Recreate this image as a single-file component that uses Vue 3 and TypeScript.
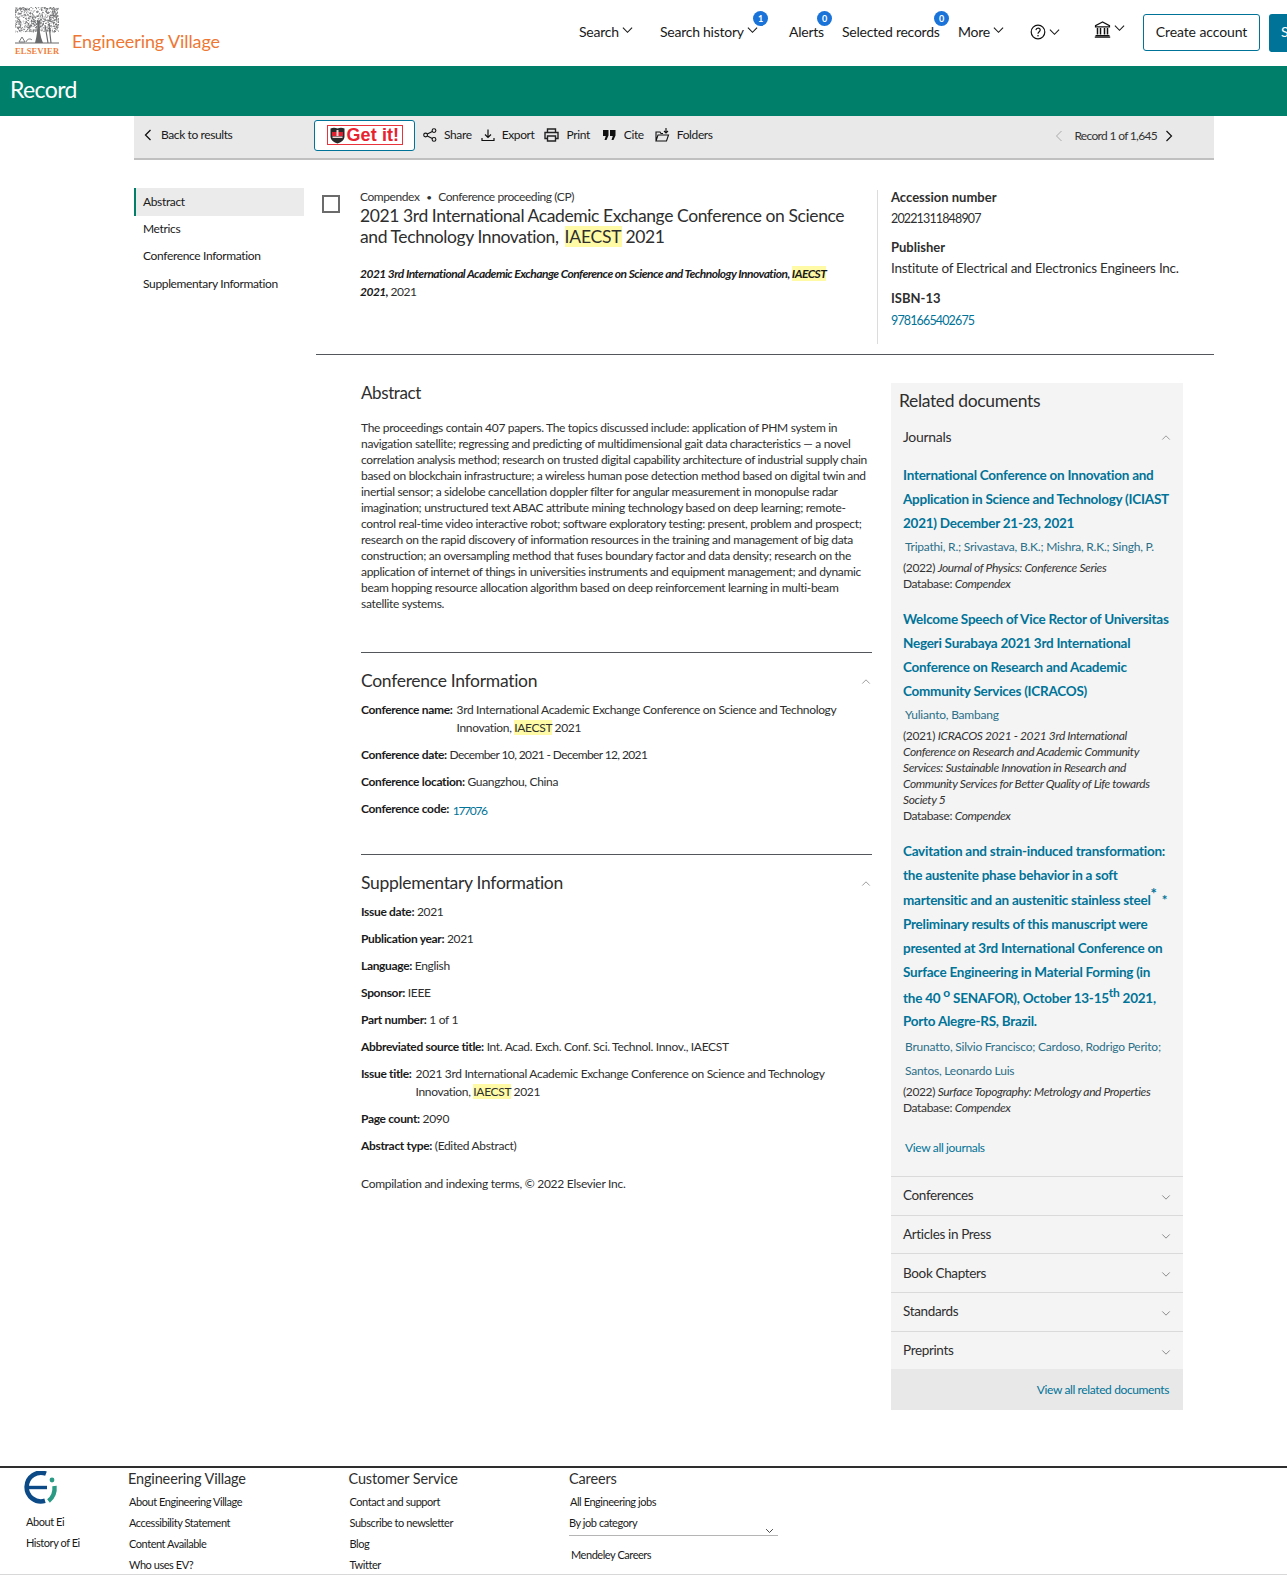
<script setup lang="ts">
const treeDots: { x: number; y: number; r: number }[] = []
let seed = 17
const rnd = () => {
  seed = (seed * 16807) % 2147483647
  return seed / 2147483647
}
for (let i = 0; i < 760; i++) {
  const x = rnd() * 44
  const y = rnd() * 25
  treeDots.push({ x: +x.toFixed(1), y: +y.toFixed(1), r: +(0.3 + rnd() * 0.4).toFixed(2) })
}

const abstractLines = [
  'The proceedings contain 407 papers. The topics discussed include: application of PHM system in',
  'navigation satellite; regressing and predicting of multidimensional gait data characteristics — a novel',
  'correlation analysis method; research on trusted digital capability architecture of industrial supply chain',
  'based on blockchain infrastructure; a wireless human pose detection method based on digital twin and',
  'inertial sensor; a sidelobe cancellation doppler filter for angular measurement in monopulse radar',
  'imagination; unstructured text ABAC attribute mining technology based on deep learning; remote-',
  'control real-time video interactive robot; software exploratory testing: present, problem and prospect;',
  'research on the rapid discovery of information resources in the training and management of big data',
  'construction; an oversampling method that fuses boundary factor and data density; research on the',
  'application of internet of things in universities instruments and equipment management; and dynamic',
  'beam hopping resource allocation algorithm based on deep reinforcement learning in multi-beam',
  'satellite systems.',
]

const sideItems = ['Metrics', 'Conference Information', 'Supplementary Information']
const collapsed = ['Conferences', 'Articles in Press', 'Book Chapters', 'Standards', 'Preprints']
const footerCols = [
  { title: 'Engineering Village', links: ['About Engineering Village', 'Accessibility Statement', 'Content Available', 'Who uses EV?'] },
  { title: 'Customer Service', links: ['Contact and support', 'Subscribe to newsletter', 'Blog', 'Twitter'] },
]
</script>

<template>
  <div class="page">
    <header class="topbar">
      <div class="brand">
        <div class="tree-wrap">
          <svg class="tree" width="44" height="38" viewBox="0 0 44 38">
            <circle v-for="(d, i) in treeDots" :key="i" :cx="d.x" :cy="d.y" :r="d.r" fill="#6f7072" />
            <path d="M22 14c1 8 0 14-2 22h8c-3-7-4-14-3-22z" fill="#6a6b6d" />
            <path d="M30 18l3 18M34 18l2 18M0 36h44" stroke="#6a6b6d" stroke-width="1.2" fill="none" />
            <path d="M4 35l3-5 3 5zM11 35c1-3 4-4 6-2" stroke="#77787a" fill="none" />
          </svg>
          <span class="elsevier">ELSEVIER</span>
        </div>
        <span class="ev-name">Engineering Village</span>
      </div>
      <nav class="nav">
        <a class="nav-item n-search">Search<svg class="chev" viewBox="0 0 12 8"><path d="M1 1.5l5 5 5-5" /></svg></a>
        <a class="nav-item n-history">Search history<svg class="chev" viewBox="0 0 12 8"><path d="M1 1.5l5 5 5-5" /></svg><span class="badge b1">1</span></a>
        <a class="nav-item n-alerts">Alerts<span class="badge b2">0</span></a>
        <a class="nav-item n-selected">Selected records<span class="badge b3">0</span></a>
        <a class="nav-item n-more">More<svg class="chev" viewBox="0 0 12 8"><path d="M1 1.5l5 5 5-5" /></svg></a>
        <a class="nav-item n-help">
          <svg class="help" width="16" height="16" viewBox="0 0 16 16">
            <circle cx="8" cy="8" r="6.8" fill="none" stroke="#111" stroke-width="1.2" />
            <path d="M5.9 6.2c.2-1.4 1.1-2 2.2-2 1.2 0 2.1.8 2.1 1.9 0 1.6-2.2 1.7-2.2 3.6" fill="none" stroke="#111" stroke-width="1.2" />
            <circle cx="8" cy="11.7" r=".8" fill="#111" />
          </svg>
          <svg class="chev" viewBox="0 0 12 8"><path d="M1 1.5l5 5 5-5" /></svg>
        </a>
        <a class="nav-item n-inst">
          <svg width="17" height="17" viewBox="0 0 17 17">
            <path d="M8.5 1L1.5 4.6v1.2h14V4.6z" fill="none" stroke="#111" stroke-width="1.2" />
            <path d="M3.5 7v6.5M6.5 7v6.5M10.5 7v6.5M13.5 7v6.5" stroke="#111" stroke-width="1.5" />
            <path d="M1.5 14.6h14M.8 16.2h15.4" stroke="#111" stroke-width="1.2" />
          </svg>
          <svg class="chev" viewBox="0 0 12 8"><path d="M1 1.5l5 5 5-5" /></svg>
        </a>
        <a class="btn-outline">Create account</a>
        <a class="btn-solid">Sign in</a>
      </nav>
    </header>

    <div class="band">Record</div>

    <div class="container">
      <div class="toolbar">
        <a class="back">
          <svg width="8" height="12" viewBox="0 0 8 12"><path d="M6.5 1L1.5 6l5 5" fill="none" stroke="#111" stroke-width="1.3" /></svg>
          Back to results
        </a>
        <a class="getit">
          <span class="getit-inner">
            <svg width="15" height="17" viewBox="0 0 15 17">
              <path d="M.5 1.500C3 .5 5 .5 7.500 1.500 10 .5 12 .5 14.500 1.500v8c0 3.500-3.500 6-7 7-3.500-1-7-3.500-7-7z" fill="#2a2a2a" />
              <path d="M2 5h11v4H2z" fill="#e0202f" />
              <path d="M2.500 9.500h10v1.500h-10zM6.500 3h2v6h-2z" fill="#f2d6d6" />
            </svg>
            Get it!
          </span>
        </a>
        <a class="tool t-share">
          <svg width="14" height="14" viewBox="0 0 14 14" fill="none" stroke="#111" stroke-width="1.1">
            <circle cx="2.600" cy="7" r="1.900" /><circle cx="11" cy="2.600" r="1.900" /><circle cx="11" cy="11.400" r="1.900" />
            <path d="M4.300 6.100l5-2.600M4.300 7.900l5 2.600" />
          </svg>Share
        </a>
        <a class="tool t-export">
          <svg width="14" height="14" viewBox="0 0 14 14" fill="none" stroke="#111" stroke-width="1.2">
            <path d="M7 1.500v7.500M4 6.500L7 9.500l3-3M1 10v2.500h12V10" />
          </svg>Export
        </a>
        <a class="tool t-print">
          <svg width="15" height="14" viewBox="0 0 15 14" fill="none" stroke="#222" stroke-width="1.4">
            <path d="M3.500 4V1h8v3M3.500 10.500H1V4.500h13v6h-2.500" /><path d="M3.500 8h8v5h-8z" />
          </svg>Print
        </a>
        <a class="tool t-cite">
          <svg width="13" height="12" viewBox="0 0 13 12" fill="#111">
            <path d="M0 1h5.500v5.500L3.500 11H1.500l1.300-4H0zM7 1h5.500v5.500L10.500 11H8.500l1.300-4H7z" />
          </svg>Cite
        </a>
        <a class="tool t-folders">
          <svg width="15" height="15" viewBox="0 0 15 15" fill="none" stroke="#111" stroke-width="1.1">
            <path d="M1 14V5h4l1 1.500h2M1 14l2-6h10.500l-2 6zM11 1v5M9 4l2 2 2-2" />
          </svg>Folders
        </a>
        <div class="pager">
          <svg width="8" height="12" viewBox="0 0 8 12"><path d="M6.500 1L1.500 6l5 5" fill="none" stroke="#aaa" stroke-width="1" /></svg>
          <span class="pager-text">Record 1 of 1,645</span>
          <svg width="8" height="12" viewBox="0 0 8 12"><path d="M1.500 1l5 5-5 5" fill="none" stroke="#111" stroke-width="1.200" /></svg>
        </div>
      </div>

      <div class="body">
        <aside class="side">
          <a class="side-item active">Abstract</a>
          <a v-for="s in sideItems" :key="s" class="side-item">{{ s }}</a>
        </aside>

        <main class="main">
          <section class="record">
            <span class="checkbox"></span>
            <div class="rec-text">
              <div class="rec-type">Compendex <span class="dot">•</span> Conference proceeding (CP)</div>
              <h1 class="rec-title">2021 3rd International Academic Exchange Conference on Science<br />and Technology Innovation, <mark>IAECST</mark> 2021</h1>
              <p class="rec-source"><b><i>2021 3rd International Academic Exchange Conference on Science and Technology Innovation, <mark>IAECST</mark><br />2021,</i></b> 2021</p>
            </div>
            <div class="meta">
              <div class="meta-label">Accession number</div>
              <div class="meta-val num">20221311848907</div>
              <div class="meta-label gap">Publisher</div>
              <div class="meta-val">Institute of Electrical and Electronics Engineers Inc.</div>
              <div class="meta-label gap g2">ISBN-13</div>
              <div class="meta-val num link">9781665402675</div>
            </div>
          </section>

          <div class="columns">
            <div class="detail">
              <h2 class="abs-head">Abstract</h2>
              <div class="abs-text">
                <div v-for="(l, i) in abstractLines" :key="i">{{ l }}</div>
              </div>

              <section class="block conf">
                <div class="block-head">
                  <h2>Conference Information</h2>
                  <svg class="chev-up" viewBox="0 0 12 8"><path d="M1.500 6.500l4.500-4.500 4.500 4.500" /></svg>
                </div>
                <div class="row hang"><b>Conference name:</b> <span class="hang-v">3rd International Academic Exchange Conference on Science and Technology<br />Innovation, <mark>IAECST</mark> 2021</span></div>
                <div class="row"><b>Conference date:</b> <span class="tight">December 10, 2021 - December 12, 2021</span></div>
                <div class="row"><b>Conference location:</b> Guangzhou, China</div>
                <div class="row"><b>Conference code:</b> <a class="code">177076</a></div>
              </section>

              <section class="block supp">
                <div class="block-head">
                  <h2>Supplementary Information</h2>
                  <svg class="chev-up" viewBox="0 0 12 8"><path d="M1.500 6.500l4.500-4.500 4.500 4.500" /></svg>
                </div>
                <div class="row"><b>Issue date:</b> 2021</div>
                <div class="row"><b>Publication year:</b> 2021</div>
                <div class="row"><b>Language:</b> English</div>
                <div class="row"><b>Sponsor:</b> IEEE</div>
                <div class="row"><b>Part number:</b> 1 of 1</div>
                <div class="row"><b>Abbreviated source title:</b> Int. Acad. Exch. Conf. Sci. Technol. Innov., IAECST</div>
                <div class="row hang"><b>Issue title:</b> <span class="hang-v">2021 3rd International Academic Exchange Conference on Science and Technology<br />Innovation, <mark>IAECST</mark> 2021</span></div>
                <div class="row"><b>Page count:</b> 2090</div>
                <div class="row"><b>Abstract type:</b> (Edited Abstract)</div>
                <p class="compile">Compilation and indexing terms, © 2022 Elsevier Inc.</p>
              </section>
            </div>

            <aside class="related">
              <h2 class="rel-head">Related documents</h2>
              <div class="acc-open">
                <span>Journals</span>
                <svg class="chev-up" viewBox="0 0 12 8"><path d="M1.500 6.500l4.500-4.500 4.500 4.500" /></svg>
              </div>
              <article class="doc d1">
                <a class="doc-title">International Conference on Innovation and<br />Application in Science and Technology (ICIAST<br />2021) December 21-23, 2021</a>
                <div class="doc-auth">Tripathi, R.; Srivastava, B.K.; Mishra, R.K.; Singh, P.</div>
                <div class="doc-src">(2022) <i>Journal of Physics: Conference Series</i><br />Database: <i>Compendex</i></div>
              </article>
              <article class="doc d2">
                <a class="doc-title">Welcome Speech of Vice Rector of Universitas<br />Negeri Surabaya 2021 3rd International<br />Conference on Research and Academic<br />Community Services (ICRACOS)</a>
                <div class="doc-auth">Yulianto, Bambang</div>
                <div class="doc-src">(2021) <i>ICRACOS 2021 - 2021 3rd International<br />Conference on Research and Academic Community<br />Services: Sustainable Innovation in Research and<br />Community Services for Better Quality of Life towards<br />Society 5</i><br />Database: <i>Compendex</i></div>
              </article>
              <article class="doc d3">
                <a class="doc-title">Cavitation and strain-induced transformation:<br />the austenite phase behavior in a soft<br />martensitic and an austenitic stainless steel<sup class="star">*</sup> *<br />Preliminary results of this manuscript were<br />presented at 3rd International Conference on<br />Surface Engineering in Material Forming (in<br />the 40 <sup>o</sup> SENAFOR), October 13-15<sup>th</sup> 2021,<br />Porto Alegre-RS, Brazil.</a>
                <div class="doc-auth two">Brunatto, Silvio Francisco; Cardoso, Rodrigo Perito;<br />Santos, Leonardo Luis</div>
                <div class="doc-src">(2022) <i>Surface Topography: Metrology and Properties</i><br />Database: <i>Compendex</i></div>
              </article>
              <a class="view-j">View all journals</a>
              <div class="acc-list">
                <div v-for="c in collapsed" :key="c" class="acc-row">
                  <span>{{ c }}</span>
                  <svg class="chev-down" viewBox="0 0 12 8"><path d="M1.500 1.500l4.500 4.500 4.500-4.500" /></svg>
                </div>
              </div>
              <div class="view-all"><a>View all related documents</a></div>
            </aside>
          </div>
        </main>
      </div>
    </div>

    <footer class="footer">
      <div class="f-ei">
        <svg width="34" height="34" viewBox="0 0 34 34" fill="none">
          <path d="M22 2.700A14.300 14.300 0 1 0 21 29.800" stroke="#0b4a86" stroke-width="4.600" />
          <path d="M4 16.500h19" stroke="#0b4a86" stroke-width="3.400" />
          <circle cx="28" cy="9" r="2.400" fill="#2a9a84" />
          <path d="M30.500 15c.6 6-1.500 11.500-6 15" stroke="#2a9a84" stroke-width="4.400" />
        </svg>
        <a>About Ei</a>
        <a>History of Ei</a>
      </div>
      <div v-for="col in footerCols" :key="col.title" class="f-col">
        <h3>{{ col.title }}</h3>
        <a v-for="l in col.links" :key="l">{{ l }}</a>
      </div>
      <div class="f-col careers">
        <h3>Careers</h3>
        <a>All Engineering jobs</a>
        <div class="f-select">
          <span>By job category</span>
          <svg class="chev-small" viewBox="0 0 12 8"><path d="M1.500 1.500l4.500 4.500 4.500-4.500" /></svg>
        </div>
        <a class="mendeley">Mendeley Careers</a>
      </div>
    </footer>
  </div>
</template>

<style>
html, body { margin: 0; padding: 0; background: #fff; }
</style>

<style scoped>
.page {
  width: 1287px;
  height: 1575px;
  overflow: hidden;
  position: relative;
  font-family: Lato, "Noto Sans", Arial, sans-serif;
  color: #2e2e2e;
  font-size: 12px;
  letter-spacing: -.3px;
  background: #fff;
}
a { text-decoration: none; color: inherit; }
h1, h2, h3, p { margin: 0; font-weight: 400; }
mark { background: #fffaa5; color: inherit; }

.topbar { height: 66px; display: flex; align-items: flex-start; }
.brand { width: 570px; display: flex; padding: 7px 0 0 15px; box-sizing: border-box; flex: none; }
.tree-wrap { width: 44px; display: flex; flex-direction: column; }
.elsevier { font-family: "Liberation Serif", serif; font-size: 8.5px; font-weight: 700; color: #f0803c; letter-spacing: .15px; line-height: 10px; white-space: nowrap; margin-top: 1px; }
.ev-name { margin: 23px 0 0 13px; font-size: 18px; line-height: 22px; color: #ee7733; white-space: nowrap; letter-spacing: -.1px; }

.nav { display: flex; flex: none; height: 66px; align-items: flex-start; white-space: nowrap; font-size: 14px; color: #1a1a1a; }
.nav-item { position: relative; display: flex; align-items: center; height: 20px; margin-top: 21px; letter-spacing: -.25px; }
.chev { width: 11px; height: 8px; margin-left: 3px; margin-top: -3px; fill: none; stroke: #1a1a1a; stroke-width: 1.200; }
.n-search { margin-left: 9px; width: 81px; }
.n-history { width: 129px; }
.n-alerts { width: 53px; }
.n-selected { width: 116px; }
.n-more { width: 72px; }
.n-help { width: 64px; }
.n-help .help { margin-top: 1px; }
.n-help .chev { margin-left: 3px; margin-top: 1px; }
.n-inst { width: 49px; margin-top: 19px; }
.badge { position: absolute; top: -10px; width: 15px; height: 15px; border-radius: 50%; background: #1a73d9; color: #fff; font-size: 9px; font-weight: 700; line-height: 15px; text-align: center; letter-spacing: 0; }
.b1 { left: 93px; }
.b2 { left: 28px; }
.b3 { left: 92px; }
.btn-outline { box-sizing: border-box; width: 117px; height: 37px; margin-top: 14px; border: 1px solid #007398; border-radius: 3px; text-align: center; line-height: 33px; letter-spacing: -.1px; }
.btn-solid { box-sizing: border-box; width: 80px; height: 38px; margin: 14px 0 0 9px; background: #007398; border-radius: 3px; color: #fff; line-height: 36px; padding-left: 12px; flex: none; }

.band { height: 50px; background: #007f6b; color: #fff; font-size: 23px; line-height: 46px; padding-left: 10px; letter-spacing: -.6px; }

.container { width: 1080px; margin-left: 134px; }
.toolbar { height: 42px; background: #e9e9e9; border-bottom: 2px solid #c0c0c0; display: flex; align-items: center; white-space: nowrap; color: #1a1a1a; position: relative; }
.back { display: flex; align-items: center; gap: 9px; width: 180px; padding: 0 0 5px 10px; box-sizing: border-box; letter-spacing: -.4px; }
.getit { box-sizing: border-box; width: 101px; height: 31px; background: #fff; border: 1px solid #007398; border-radius: 3px; display: flex; align-items: center; justify-content: center; margin-top: -4px; }
.getit-inner { box-sizing: border-box; width: 76px; height: 20px; border: 1px solid #e8323c; display: flex; align-items: center; gap: 2px; padding-left: 2px; color: #e8232f; font-family: "Liberation Sans", Arial, sans-serif; font-weight: 700; font-size: 18px; letter-spacing: .1px; }
.tool { display: flex; align-items: center; gap: 7px; padding-bottom: 5px; letter-spacing: -.38px; }
.t-share { margin-left: 8px; }
.t-export { margin-left: 9px; }
.t-print { margin-left: 10px; }
.t-cite { margin-left: 13px; gap: 8px; }
.t-folders { margin-left: 11px; }
.pager { margin-left: auto; margin-right: 41px; display: flex; align-items: center; color: #333; padding-bottom: 3px; }
.pager-text { margin: 0 8px 0 11px; letter-spacing: -.68px; }

.body { display: flex; }
.side { width: 170px; flex: none; padding-top: 28px; }
.side-item { display: block; height: 27px; line-height: 27px; padding-left: 9px; white-space: nowrap; color: #1a1a1a; letter-spacing: -.35px; }
.side-item.active { background: #ebebeb; border-left: 2px solid #007f6b; padding-left: 7px; height: 28px; line-height: 28px; margin-bottom: -1px; }
.side-item:last-child { padding-top: 1px; }
.main { width: 898px; margin-left: 12px; flex: none; }

.record { display: flex; height: 195px; border-bottom: 1px solid #53565a; box-sizing: border-box; position: relative; }
.checkbox { box-sizing: border-box; width: 18px; height: 18px; margin: 35px 0 0 6px; border: 2px solid #6b6b6b; flex: none; background: #fff; }
.rec-text { width: 517px; margin-left: 20px; flex: none; padding-top: 29px; }
.rec-type { line-height: 15px; white-space: nowrap; color: #333; letter-spacing: -.42px; }
.dot { margin: 0 4px; font-size: 10px; }
.rec-title { font-size: 17.500px; line-height: 21px; color: #2e2e2e; white-space: nowrap; letter-spacing: -.41px; }
.rec-title mark { letter-spacing: -.2px; margin-left: 2px; }
.rec-source { margin-top: 18px; line-height: 18px; white-space: nowrap; color: #2e2e2e; letter-spacing: -.52px; }
.rec-source b { color: #1a1a1a; }
.meta { box-sizing: border-box; margin-top: 30px; height: 154px; border-left: 1px solid #dcdcdc; padding-left: 13px; flex: none; width: 336px; font-size: 13.500px; color: #2e2e2e; white-space: nowrap; letter-spacing: -.25px; }
.meta-label { font-weight: 700; line-height: 21px; font-size: 13px; margin-top: -3px; letter-spacing: 0; }
.meta-label.gap { margin-top: 8px; }
.meta-label.g2 { margin-top: 9px; }
.meta-val { line-height: 21px; }
.meta-val.link { margin-top: 1px; }
.num { font-size: 12.500px; letter-spacing: -.85px; }
.link { color: #007398; }

.columns { display: flex; }
.detail { width: 511px; margin-left: 45px; flex: none; }
.abs-head { font-size: 17px; line-height: 24px; margin-top: 26px; letter-spacing: -.4px; }
.abs-text { margin-top: 15px; line-height: 16px; white-space: nowrap; letter-spacing: -.32px; }
.block { border-top: 1px solid #53565a; }
.conf { margin-top: 40px; height: 201px; }
.block-head { display: flex; justify-content: space-between; align-items: center; height: 24px; padding-top: 16px; }
.block-head h2 { font-size: 17.500px; line-height: 24px; letter-spacing: -.3px; }
.block-head .chev-up { margin-right: 1px; }
.chev-up { width: 10px; height: 7px; fill: none; stroke: #8a8a8a; stroke-width: 1; }
.row { line-height: 18px; margin-top: 9px; white-space: nowrap; letter-spacing: -.33px; }
.block-head + .row { margin-top: 8px; }
.row b { color: #1a1a1a; }
.tight { letter-spacing: -.62px; }
.hang { display: flex; gap: 4px; }
.code { color: #007398; position: relative; top: 2px; margin-left: 1px; letter-spacing: -1.3px; }
.compile { margin-top: 20px; line-height: 18px; letter-spacing: -.27px; }

.related { box-sizing: border-box; margin-left: 19px; margin-top: 28px; width: 292px; background: #f4f4f4; flex: none; white-space: nowrap; }
.rel-head { font-size: 17.500px; line-height: 24px; padding: 6px 0 0 8px; letter-spacing: -.35px; }
.acc-open { display: flex; justify-content: space-between; align-items: center; height: 24px; margin-top: 11px; padding: 0 12px 0 12px; font-size: 14px; letter-spacing: -.3px; }
.acc-open .chev-up { position: relative; top: 1px; }
.doc { padding-left: 12px; }
.d1 { margin-top: 15px; }
.d2 { margin-top: 15px; }
.d3 { margin-top: 15px; }
.doc-title { display: block; font-size: 13.500px; font-weight: 700; line-height: 24px; color: #007398; letter-spacing: -.25px; }
.d3 .doc-title { padding-bottom: 2px; }
.doc-title sup { font-size: 12px; line-height: 18px; }
.doc-title sup.star { font-size: 15px; line-height: 12px; margin-right: 2px; }
.doc-auth { line-height: 24px; padding-left: 2px; color: #2b6f88; letter-spacing: -.22px; }
.doc-src { margin-top: 1px; line-height: 16px; color: #333; letter-spacing: -.37px; }
.view-j { display: block; margin: 24px 0 0 14px; line-height: 16px; color: #007398; letter-spacing: -.35px; }
.acc-list { margin-top: 20px; }
.acc-row { box-sizing: border-box; height: 38.700px; border-top: 1px solid #dadada; display: flex; justify-content: space-between; align-items: center; padding: 0 12px 1px; font-size: 13.500px; letter-spacing: -.35px; }
.chev-down { width: 10px; height: 7px; fill: none; stroke: #777; stroke-width: 1; position: relative; top: 2px; }
.view-all { height: 41px; background: #e8e8e8; text-align: right; padding-right: 14px; line-height: 41px; color: #007398; letter-spacing: -.38px; }

.footer { position: absolute; left: 0; top: 1466px; width: 1287px; height: 109px; box-sizing: border-box; border-top: 2px solid #2e2e2e; border-bottom: 1px solid #d8d8d8; display: flex; font-size: 11px; color: #1a1a1a; white-space: nowrap; letter-spacing: -.45px; }
.f-ei { width: 102px; margin-left: 26px; flex: none; display: flex; flex-direction: column; padding-top: 3px; }
.f-ei svg { margin-left: -2px; }
.f-ei a { display: block; line-height: 21px; }
.f-ei svg + a { margin-top: 6px; }
.f-col { width: 220px; flex: none; display: flex; flex-direction: column; }
.f-col h3 { font-size: 14.500px; line-height: 20px; margin-top: 1px; color: #2e2e2e; letter-spacing: -.15px; }
.f-col a { display: block; line-height: 21px; padding-left: 1px; }
.f-col h3 + a { margin-top: 2px; }
.f-col:nth-child(3), .f-col:nth-child(4) { margin-left: .5px; }
.f-select { width: 209px; height: 23px; line-height: 21px; border-bottom: 1px solid #b5b5b5; position: relative; }
.chev-small { position: absolute; right: 4px; top: 16px; width: 9px; height: 6px; fill: none; stroke: #333; stroke-width: 1.200; }
.f-col .mendeley { padding-left: 2px; margin-top: 8px; }
</style>
